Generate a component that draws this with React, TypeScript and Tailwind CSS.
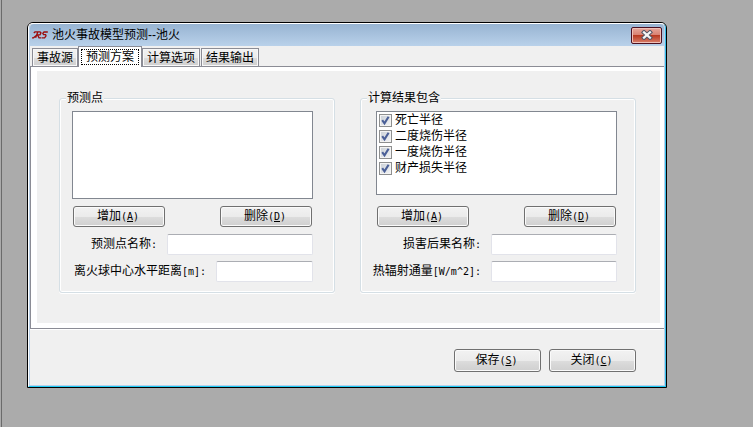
import { useState } from "react";
import clsx from "clsx";

const TABS = ["事故源", "预测方案", "计算选项", "结果输出"];
const RESULTS = ["死亡半径", "二度烧伤半径", "一度烧伤半径", "财产损失半径"];

function Mono({ children }: { children: React.ReactNode }) {
  return <span className="font-['DejaVu_Sans_Mono',monospace] text-[10px]">{children}</span>;
}

function PushButton({ label, hotkey, className }: { label: string; hotkey: string; className: string }) {
  return (
    <button
      type="button"
      className={clsx(
        "flex items-center justify-center rounded-[3px] border border-[#707070] bg-[linear-gradient(#f2f2f2,#ebebeb_50%,#dddddd_50%,#cfcfcf)] pr-[2px] shadow-[inset_0_0_0_1px_#fafafa]",
        className,
      )}
    >
      <span>{label}<Mono>(<u>{hotkey}</u>)</Mono></span>
    </button>
  );
}

function Field({ id, label, unit = "", inputClass }: { id: string; label: string; unit?: string; inputClass: string }) {
  return (
    <div className="flex items-center justify-end gap-[10px]">
      <label htmlFor={id} className="whitespace-nowrap">{label}<Mono>{unit}:</Mono></label>
      <input
        id={id}
        type="text"
        className={clsx("h-[21px] rounded-[2px] border border-[#e2e3ea] border-t-[#abadb3] bg-white px-1 outline-none", inputClass)}
      />
    </div>
  );
}

function Group({ title, children }: { title: string; children: React.ReactNode }) {
  return (
    <fieldset className="min-w-0 rounded-[3px] border border-[#d5dfe5] pb-[10px] pl-3 shadow-[inset_0_0_0_1px_#fff,0_1px_0_#fff]">
      <legend className="-ml-[6px] h-[14px] bg-[#f0f0f0] px-px leading-[14px]">{title}</legend>
      {children}
    </fieldset>
  );
}

function CheckItem({ label }: { label: string }) {
  const [checked, setChecked] = useState(true);
  return (
    <label className="flex h-4 items-start gap-[3px]">
      <span className="relative mt-[2px] size-[13px] shrink-0">
        <input
          type="checkbox"
          checked={checked}
          onChange={e => setChecked(e.target.checked)}
          className="block size-[13px] appearance-none border border-[#8e8f8f] bg-[linear-gradient(135deg,#c9cfd6,#f4f5f6)] shadow-[inset_0_0_0_1px_#f4f4f4]"
        />
        {checked && (
          <svg viewBox="0 0 13 13" className="pointer-events-none absolute inset-0 size-[13px]">
            <path d="M3.2 6.2 L5.5 9.3 L9.6 2.8" fill="none" stroke="#4a5f97" strokeWidth="2.1" />
          </svg>
        )}
      </span>
      <span className="leading-[16px]">{label}</span>
    </label>
  );
}

function TitleBar() {
  return (
    <header className="flex h-[22px] items-center rounded-t-[4px] bg-linear-to-b from-[#98b4d2] to-[#b9d1ea] pr-[2px] pl-[2px]">
      <svg viewBox="0 0 16 8" className="h-2 w-4" fill="none" stroke="#9c0c0c" strokeWidth="1.3">
        <path d="M0 6.8 H1.5 L5 3.8 H8 L9 1.8 L8 0.9 H3 L1.8 2 M5.8 1 L3.6 6.8 M5.6 4 L7 6.8 H9 M15.8 1 H12 L10.8 2.4 L11.5 3.6 H13.6 L14 4.8 L12.6 6.8 H9.5" />
      </svg>
      <h1 className="ml-1 flex-1">池火事故模型预测--池火</h1>
      <button
        type="button"
        aria-label="关闭窗口"
        className="flex h-[17px] w-[31px] items-center justify-center rounded-[2px] border border-[#4c1020] bg-[linear-gradient(#e6a79c,#d98273_45%,#b83a22_50%,#d9806c)] shadow-[inset_0_0_0_1px_#efc0b8]"
      >
        <svg viewBox="0 0 12 10" className="h-[10px] w-3" fill="none">
          <path d="M3 2.3 L9 7.7 M9 2.3 L3 7.7" stroke="#535666" strokeWidth="4.2" strokeLinecap="square" />
          <path d="M3 2.3 L9 7.7 M9 2.3 L3 7.7" stroke="#f5f5f5" strokeWidth="2.2" strokeLinecap="square" />
        </svg>
      </button>
    </header>
  );
}

export default function App() {
  const [tab, setTab] = useState(1);

  return (
    <div className="flex min-h-screen bg-[#ababab] pl-px font-['Liberation_Sans','Noto_Sans_CJK_SC',sans-serif] text-[12px] leading-[16px] text-black">
      <main className="min-w-0 flex-1 border-l border-[#6b6b6b] pt-[22px] pr-[86px] pl-[25px]">
        <div className="rounded-t-[6px] border border-black">
          <div className="rounded-t-[5px] border border-t-white border-r-[#35bde8] border-b-[#1ccbf5] border-l-white">
            <div className="rounded-t-[4px] border-x border-b border-[#b9d1ea] bg-[#f0f0f0]">
              <TitleBar />

              <div role="tablist" className="flex h-5 items-end gap-px pl-[2px]">
                {TABS.map((name, i) => (
                  <button
                    key={name}
                    type="button"
                    role="tab"
                    aria-selected={tab === i}
                    onClick={() => setTab(i)}
                    className={clsx(
                      "relative border border-b-0 border-[#8b8c95] whitespace-nowrap",
                      tab === i
                        ? "-mx-px -mb-px h-[21px] bg-white px-[2px] pt-[2px] pb-[2px]"
                        : "h-[18px] bg-[linear-gradient(#f2f2f2,#ebebeb_50%,#dddddd_50%,#cfcfcf)] px-1 shadow-[inset_0_0_0_1px_#f8f8f8]",
                    )}
                  >
                    {tab === i ? (
                      <span className="block h-4 border border-dotted border-black px-1 leading-[14px]">{name}</span>
                    ) : name}
                  </button>
                ))}
              </div>

              <div role="tabpanel" className="border-y border-l border-[#8b8c95] bg-white pt-1 pr-1 pb-[5px] pl-[6px]">
                <div className="grid grid-cols-2 gap-[25px] bg-[#f0f0f0] pt-5 pr-6 pb-[30px] pl-[22px]">
                  <Group title="预测点">
                    <div className="pt-[6px] pr-[21px]">
                      <div className="h-[88px] border border-[#828790] bg-white" />
                      <div className="mt-[7px] mb-[7px] flex justify-between px-px">
                        <PushButton label="增加" hotkey="A" className="h-[21px] w-[92px]" />
                        <PushButton label="删除" hotkey="D" className="h-[21px] w-[92px]" />
                      </div>
                      <div className="space-y-[6px]">
                        <Field id="point-name" label="预测点名称" inputClass="w-[146px]" />
                        <Field id="distance" label="离火球中心水平距离" unit="[m]" inputClass="w-[97px]" />
                      </div>
                    </div>
                  </Group>

                  <Group title="计算结果包含">
                    <div className="pt-[6px] pr-[18px]">
                      <div className="ml-[3px] h-[84px] border border-[#828790] bg-white pl-[2px]">
                        {RESULTS.map(name => <CheckItem key={name} label={name} />)}
                      </div>
                      <div className="mt-[11px] mb-[7px] ml-[3px] flex justify-between px-px">
                        <PushButton label="增加" hotkey="A" className="h-[21px] w-[92px]" />
                        <PushButton label="删除" hotkey="D" className="h-[21px] w-[92px]" />
                      </div>
                      <div className="space-y-[6px]">
                        <Field id="damage-name" label="损害后果名称" inputClass="w-[126px]" />
                        <Field id="heat-flux" label="热辐射通量" unit="[W/m^2]" inputClass="w-[126px]" />
                      </div>
                    </div>
                  </Group>
                </div>
              </div>

              <footer className="flex justify-end gap-2 border-t border-white pt-[19px] pr-7 pb-[13px]">
                <PushButton label="保存" hotkey="S" className="h-[23px] w-[87px]" />
                <PushButton label="关闭" hotkey="C" className="h-[23px] w-[87px]" />
              </footer>
            </div>
          </div>
        </div>
      </main>
    </div>
  );
}
